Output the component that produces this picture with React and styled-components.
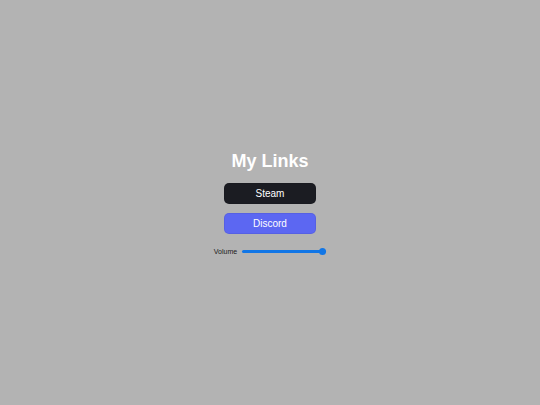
import React, { useState } from 'react';
import styled, { createGlobalStyle } from 'styled-components';

const GlobalStyle = createGlobalStyle`
  html, body {
    margin: 0;
    padding: 0;
    background: #b3b3b3;
    font-family: "Liberation Sans", Arial, sans-serif;
  }
`;

const Page = styled.div`
  display: flex;
  justify-content: center;
  align-items: center;
  height: 100vh;
`;

const Column = styled.div`
  display: flex;
  flex-direction: column;
  align-items: center;
`;

const Title = styled.h1`
  margin: 0 0 11px;
  font-size: 18px;
  font-weight: 700;
  color: #ffffff;
  line-height: 22px;
`;

const LinkButton = styled.a`
  display: flex;
  align-items: center;
  justify-content: center;
  width: 92px;
  height: 21px;
  margin-bottom: 9px;
  border-radius: 5px;
  background: ${(p) => p.bg};
  color: #fff;
  font-size: 10px;
  text-decoration: none;
  box-sizing: border-box;
  border: 1px solid rgba(0, 0, 0, 0.06);
`;

const VolumeRow = styled.label`
  display: flex;
  align-items: center;
  gap: 5px;
  margin-top: 5px;
  font-size: 7px;
  color: #1a1a1a;
`;

const Range = styled.input`
  -webkit-appearance: none;
  appearance: none;
  width: 84px;
  height: 3px;
  margin: 0;
  border-radius: 2px;
  background: #1176e6;
  outline: none;

  &::-webkit-slider-thumb {
    -webkit-appearance: none;
    width: 7px;
    height: 7px;
    border-radius: 50%;
    background: #1176e6;
    border: none;
  }
`;

const App = () => {
  const [volume, setVolume] = useState(100);

  return (
    <Page>
      <GlobalStyle />
      <Column>
        <Title>My Links</Title>
        <LinkButton bg="#1b1c22">Steam</LinkButton>
        <LinkButton bg="#5c67f2">Discord</LinkButton>
        <VolumeRow>
          Volume
          <Range
            type="range"
            min="0"
            max="100"
            value={volume}
            onChange={(e) => setVolume(e.target.value)}
          />
        </VolumeRow>
      </Column>
    </Page>
  );
};

export default App;
